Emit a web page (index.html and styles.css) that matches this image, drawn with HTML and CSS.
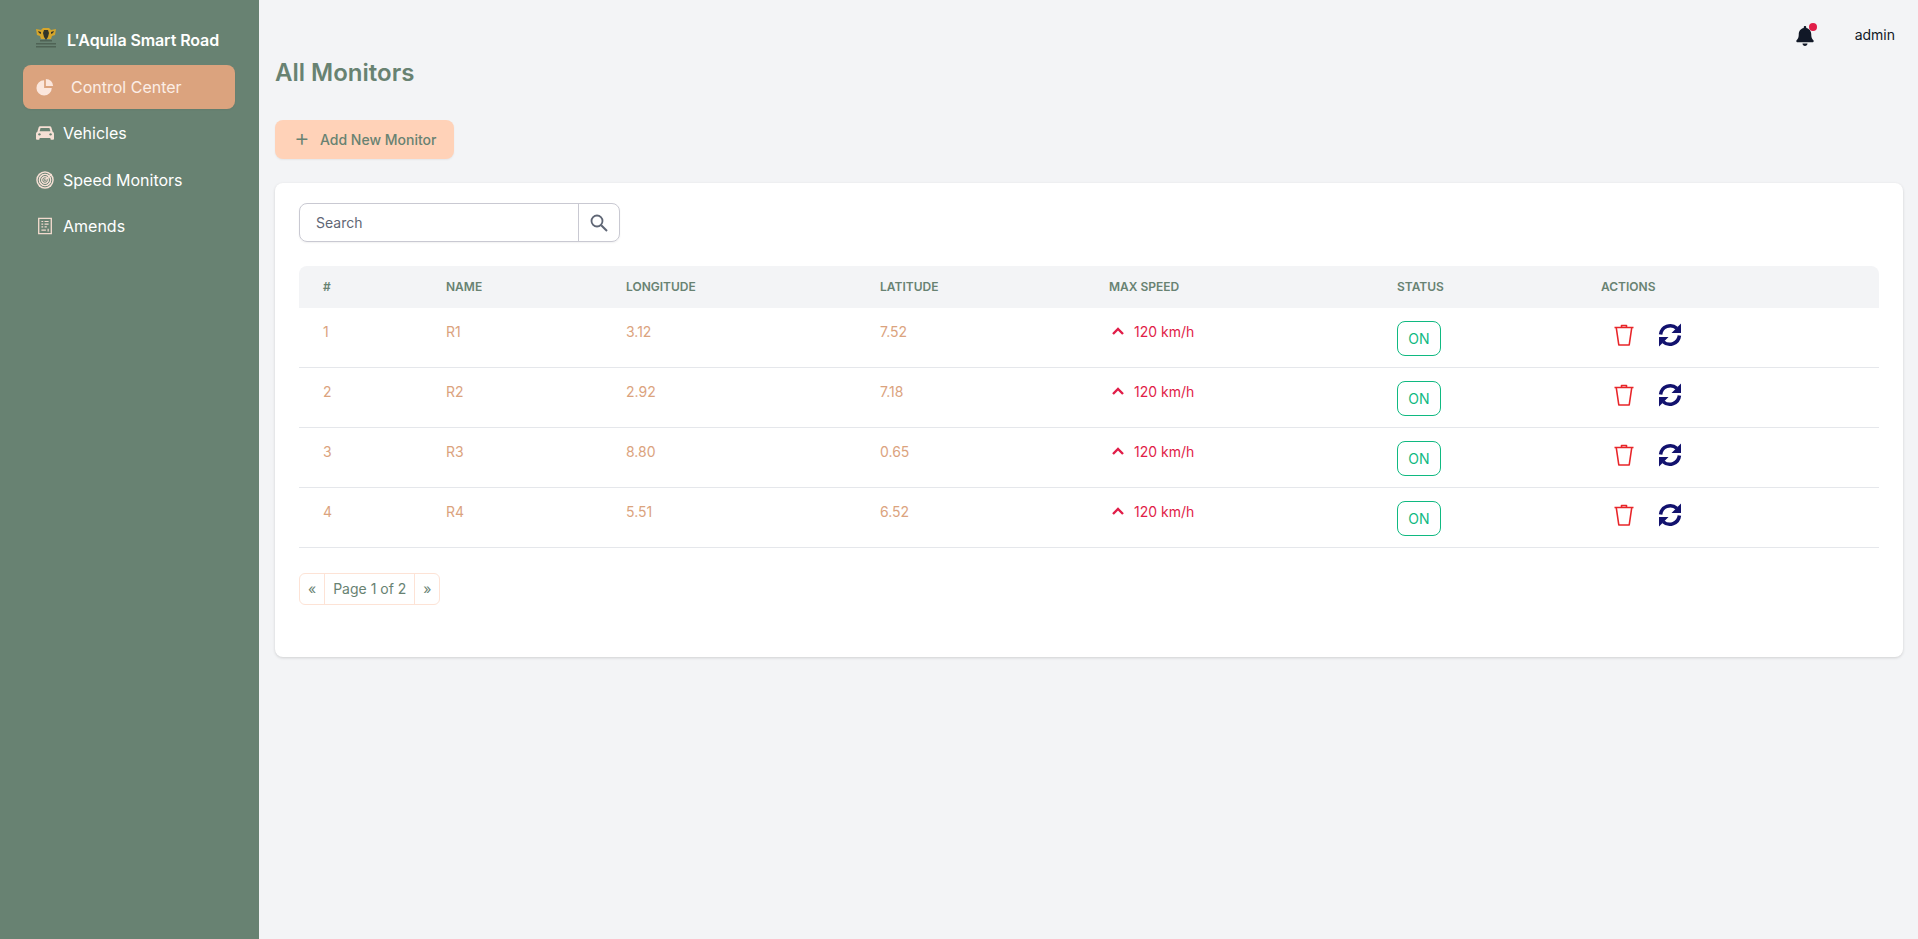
FILE: index.html
```html
<!DOCTYPE html>
<html lang="en">
<head>
<meta charset="utf-8">
<title>All Monitors</title>
<link rel="stylesheet" href="styles.css">
</head>
<body>
<svg width="0" height="0" class="defs">
  <defs>
    <symbol id="trash" viewBox="0 0 20 22"><path d="M.5 3.500h19M7.500 3.200V1.500h5v1.700M2.300 4l2.500 17h10.400L17.700 4" fill="none" stroke="#e8262a" stroke-width="1.600" stroke-linejoin="round"/></symbol>
    <symbol id="sync" viewBox="0 0 24 26"><path d="M2.600 12.500A9.700 9.700 0 0 1 18.800 6.300M21.400 13.500A9.700 9.700 0 0 1 5.200 19.700" fill="none" stroke="#12126e" stroke-width="3.500"/><path fill="#12126e" d="M23 1.500v9.500h-9.500zM1 24.500V15h9.500z"/></symbol>
    <symbol id="up" viewBox="0 0 14 10"><path d="M2 8l5-5 5 5" fill="none" stroke="#e11d48" stroke-width="2.400"/></symbol>
  </defs>
</svg>
<div class="app">
  <aside class="sidebar">
    <div class="brand">
      <svg class="logo" viewBox="0 0 22 22" aria-hidden="true">
        <path fill="#d6a52a" d="M1 2l5 1 2-2h6l2 2 5-1-1 6-3 1-1 3H6L5 9 2 8z"/>
        <path fill="#33352a" d="M9 3h4l1 3-1 4-2 3-2-3-1-4zM3 4l3 1v2L4 6zM19 4l-3 1v2l2-1z"/>
        <path fill="#4f6355" d="M5 13h12v1.500H5zM1 16h20v1.500H1zM1 19h20v1.500H1z"/>
      </svg>
      <span>L'Aquila Smart Road</span>
    </div>
    <nav class="nav">
      <a class="nav-item active">
        <svg class="nav-icon" viewBox="0 0 20 20"><path fill="#fbe6dc" d="M9 2.500v8.500h8.500A8.500 8.500 0 1 1 9 2.500z"/><path fill="#fbe6dc" d="M11 1a8 8 0 0 1 8 8h-8z"/></svg>
        <span>Control Center</span>
      </a>
      <a class="nav-item">
        <svg class="nav-icon" viewBox="0 0 20 20"><path fill="#f6e0d5" d="M4.500 2.500h11c.7 0 1.200.4 1.500 1l1.500 5c.9.500 1.500 1.300 1.500 2.300v5.700c0 .6-.4 1-1 1h-2c-.6 0-1-.4-1-1V15.500H4v1c0 .6-.4 1-1 1H1c-.6 0-1-.4-1-1v-5.700C0 9.800.6 9 1.500 8.500L3 3.500c.3-.6.800-1 1.500-1z"/><path fill="#688272" d="M5 4.500h10l1 3.500H4z"/><circle cx="3.800" cy="11.500" r="1.300" fill="#688272"/><circle cx="16.200" cy="11.500" r="1.300" fill="#688272"/></svg>
        <span>Vehicles</span>
      </a>
      <a class="nav-item">
        <svg class="nav-icon" viewBox="0 0 20 20"><circle cx="10" cy="10" r="9.700" fill="#f6e0d5"/><g fill="none" stroke="#688272" stroke-width="1.100"><circle cx="10" cy="10" r="7.600"/><circle cx="10" cy="10" r="5"/><circle cx="10" cy="10" r="2.500"/></g><circle cx="10" cy="10" r="1" fill="#688272"/><path d="M10.500 9.500l7-6" stroke="#f6e0d5" stroke-width="1.400"/></svg>
        <span>Speed Monitors</span>
      </a>
      <a class="nav-item">
        <svg class="nav-icon" viewBox="0 0 20 20"><path fill="none" stroke="#f1dacd" stroke-width="1.500" d="M3 1.500h14v17H3z"/><path stroke="#f1dacd" stroke-width="1.300" d="M6 5h2M9.500 5H14M6 8h2M9.500 8H14M6 11h2M9.500 11H12M6 14.500h5M13.500 13v3"/></svg>
        <span>Amends</span>
      </a>
    </nav>
  </aside>
  <main class="main">
    <header class="topbar">
      <span class="bell">
        <svg viewBox="0 0 448 512" class="bell-icon"><path fill="#111827" d="M224 512c35.320 0 63.970-28.650 63.970-64H160.030c0 35.350 28.650 64 63.970 64zm215.390-149.710c-19.320-20.760-55.470-51.990-55.470-154.290 0-77.700-54.480-139.900-127.940-155.160V32c0-17.670-14.320-32-31.980-32s-31.980 14.330-31.980 32v20.840C118.560 68.100 64.080 130.300 64.080 208c0 102.300-36.150 133.530-55.470 154.290-6 6.450-8.660 14.160-8.610 21.710.11 16.400 12.980 32 32.100 32h383.800c19.120 0 32-15.600 32.100-32 .05-7.550-2.610-15.270-8.610-21.710z"/></svg>
        <i class="dot"></i>
      </span>
      <span class="user">admin</span>
    </header>
    <h1 class="title">All Monitors</h1>
    <button class="add-btn" type="button"><span class="plus">+</span><span>Add New Monitor</span></button>
    <section class="card">
      <div class="search">
        <span class="search-input">Search</span>
        <span class="search-btn">
          <svg viewBox="0 0 20 20" width="20" height="20"><circle cx="8" cy="8" r="5.500" fill="none" stroke="#5f6675" stroke-width="1.800"/><path d="M12.200 12.200L18 18" stroke="#5f6675" stroke-width="2"/></svg>
        </span>
      </div>
      <div class="table">
        <div class="row head"><div>#</div><div>NAME</div><div>LONGITUDE</div><div>LATITUDE</div><div>MAX SPEED</div><div>STATUS</div><div>ACTIONS</div></div>
        <div class="row"><div>1</div><div>R1</div><div>3.12</div><div>7.52</div><div class="speed"><svg class="up"><use href="#up"/></svg>120 km/h</div><div class="status"><span class="badge">ON</span></div><div class="actions"><svg class="trash"><use href="#trash"/></svg><svg class="sync"><use href="#sync"/></svg></div></div>
        <div class="row"><div>2</div><div>R2</div><div>2.92</div><div>7.18</div><div class="speed"><svg class="up"><use href="#up"/></svg>120 km/h</div><div class="status"><span class="badge">ON</span></div><div class="actions"><svg class="trash"><use href="#trash"/></svg><svg class="sync"><use href="#sync"/></svg></div></div>
        <div class="row"><div>3</div><div>R3</div><div>8.80</div><div>0.65</div><div class="speed"><svg class="up"><use href="#up"/></svg>120 km/h</div><div class="status"><span class="badge">ON</span></div><div class="actions"><svg class="trash"><use href="#trash"/></svg><svg class="sync"><use href="#sync"/></svg></div></div>
        <div class="row"><div>4</div><div>R4</div><div>5.51</div><div>6.52</div><div class="speed"><svg class="up"><use href="#up"/></svg>120 km/h</div><div class="status"><span class="badge">ON</span></div><div class="actions"><svg class="trash"><use href="#trash"/></svg><svg class="sync"><use href="#sync"/></svg></div></div>
      </div>
      <div class="pager"><span class="pg">«</span><span class="pg mid">Page 1 of 2</span><span class="pg">»</span></div>
    </section>
  </main>
</div>
</body>
</html>
```
FILE: styles.css
```css
* { box-sizing: border-box; }
html, body { margin: 0; height: 100%; }
body { font-family: Inter, "Noto Sans", sans-serif; background: #f3f4f6; color: #111827; overflow: hidden; }
.defs { display: block; height: 0; }
.app { display: flex; height: 939px; }

.sidebar { width: 259px; flex: none; background: #688272; padding: 24px 24px 0 23px; color: #fff; }
.brand { display: flex; align-items: center; height: 32px; padding-left: 12px; gap: 10px; font-weight: 600; font-size: 16px; letter-spacing: -.1px; }
.logo { width: 22px; height: 22px; margin-top: -4px; }
.nav { display: flex; flex-direction: column; margin-top: 9px; }
.nav-item { display: flex; align-items: center; height: 44px; padding-left: 13px; border-radius: 8px; font-size: 16px; margin-bottom: 2.400px; gap: 9px; }
.nav-item.active { background: #dba37e; color: #fbeee6; gap: 17px; box-shadow: 0 1px 2px rgba(0,0,0,.05); }
.nav-icon { width: 18px; height: 18px; flex: none; }

.main { flex: 1; padding: 0 15px 0 16px; min-width: 0; }
.topbar { display: flex; justify-content: flex-end; align-items: center; height: 54px; padding: 20px 8px 6px 0; }
.bell { position: relative; display: block; width: 18px; height: 20px; margin: 4px 41px 0 0; }
.bell-icon { width: 18px; height: 20px; display: block; }
.dot { position: absolute; top: -3px; right: -3px; width: 8px; height: 8px; border-radius: 50%; background: #e11d48; }
.user { font-size: 14px; }
.title { margin: 3px 0 0; font-size: 24px; line-height: 32px; font-weight: 600; color: #688272; }
.add-btn { display: flex; align-items: center; margin-top: 31px; height: 39px; width: 179px; padding: 0 0 0 20px; border: 0; border-radius: 8px; background: #ffd2b8; color: #688272; font: 500 14px Inter, sans-serif; box-shadow: 0 1px 2px rgba(0,0,0,.06); }
.plus { font-size: 24px; font-weight: 300; line-height: 1; width: 25px; text-align: left; margin: -3px 0 0 -1px; }
.plus + span { margin-left: 1px; }

.card { margin-top: 24px; height: 474px; background: #fff; border-radius: 8px; padding: 20px 24px; box-shadow: 0 1px 3px rgba(0,0,0,.15); }
.search { display: flex; width: 321px; height: 39px; border: 1px solid #c9c9d2; border-radius: 8px; box-shadow: 0 1px 2px rgba(0,0,0,.06); }
.search-input { flex: 1; padding-left: 16px; font-size: 14px; line-height: 37px; color: #5f6675; }
.search-btn { width: 41px; border-left: 1px solid #c9c9d2; display: flex; align-items: center; justify-content: center; }

.table { margin-top: 24px; }
.row { display: grid; grid-template-columns: 123px 180px 254px 229px 288px 204px 302px; height: 60px; border-bottom: 1px solid #e5e7eb; font-size: 14px; color: #dba37e; padding-top: 14px; }
.row > div { padding-left: 24px; line-height: 20px; }
.row.head { height: 42px; background: #f3f4f6; border: 0; border-radius: 8px 8px 0 0; padding-top: 0; font-size: 12px; font-weight: 600; color: #688272; align-items: center; }
.speed { color: #e11d48; display: flex; align-items: flex-start; }
.up { width: 14px; height: 10px; margin: 4px 9px 0 2px; flex: none; }
.row > .status, .row > .actions { line-height: 1; }
.row > .status { margin-top: -1px; }
.badge { display: inline-flex; align-items: center; justify-content: center; width: 44px; height: 35px; border: 1px solid #10b981; border-radius: 8px; color: #10b981; font-size: 14px; font-weight: 400; background: #fff; }
.actions { display: flex; align-items: flex-start; }
.row > .actions { padding-left: 37px; padding-top: 2px; }
.trash { width: 20px; height: 22px; }
.sync { width: 24px; height: 26px; margin-left: 24px; margin-top: -2px; }

.pager { display: inline-flex; margin-top: 25px; height: 32px; border: 1px solid #fde3d6; border-radius: 6px; color: #688272; font-size: 14px; line-height: 30px; }
.pg { padding: 0 8px; }
.mid { border-left: 1px solid #fde3d6; border-right: 1px solid #fde3d6; }
```
